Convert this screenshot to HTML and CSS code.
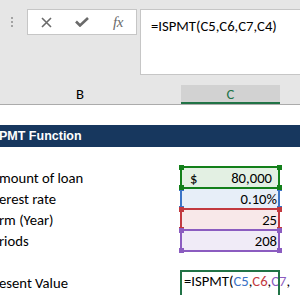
FILE: index.html
```html
<!DOCTYPE html>
<html lang="en">
<head>
    <meta charset="UTF-8">
    <meta name="viewport" content="width=device-width, initial-scale=1.0">
    <title>ISPMT Function</title>
    <link rel="stylesheet" href="styles.css">
</head>
<body>
    <div class="top">
        <div class="formula-bar">
            <div class="grip"><span></span><span></span><span></span></div>
            <div class="fx-tools">
                <span class="tool">
                    <svg width="11" height="11" viewBox="0 0 11 11">
                        <path d="M1 1 L10 10 M10 1 L1 10" stroke="#6a6a6a" stroke-width="1.6" fill="none"/>
                    </svg>
                </span>
                <span class="tool">
                    <svg width="14" height="10" viewBox="0 0 14 10">
                        <path d="M1 4.5 L5 8.5 L13 1" stroke="#6a6a6a" stroke-width="2.6" fill="none"/>
                    </svg>
                </span>
                <span class="tool fx">fx</span>
            </div>
            <div class="formula-input">=ISPMT(C5,C6,C7,C4)</div>
        </div>

        <div class="col-headers">
            <div class="col-head">B</div>
            <div class="col-head active">C</div>
            <div class="col-head"></div>
        </div>
    </div>

    <div class="sheet">
        <div class="row blank"></div>
        <div class="row title">PMT Function</div>
        <div class="row blank"></div>

        <div class="row">
            <div class="label">mount of loan</div>
            <div class="cell ref ref-green accounting"><span>$</span><span>80,000</span></div>
        </div>
        <div class="row">
            <div class="label">erest rate</div>
            <div class="cell ref ref-blue">0.10%</div>
        </div>
        <div class="row">
            <div class="label">rm (Year)</div>
            <div class="cell ref ref-red">25</div>
        </div>
        <div class="row">
            <div class="label">riods</div>
            <div class="cell ref ref-purple">208</div>
        </div>
        <div class="row">
            <div class="label"></div>
            <div class="cell"></div>
        </div>
        <div class="row">
            <div class="label">esent Value</div>
            <div class="cell editing">=ISPMT(<span class="c-blue">C5</span>,<span class="c-red">C6</span>,<span class="c-purple">C7</span>,</div>
        </div>
    </div>
</body>
</html>
```

FILE: styles.css
```css
:root {
    --grey: #e6e6e6;
    --box-border: #c6c6c6;
    --excel-green: #217346;
    --title-blue: #17375e;
    --ref-green: #13801a;
    --ref-blue: #3b73c5;
    --ref-red: #c2393f;
    --ref-purple: #8b5cc0;
    --cell-font: Carlito, Lato, 'Liberation Sans', sans-serif;
}

* {
    margin: 0;
    padding: 0;
    box-sizing: border-box;
}

body {
    width: 300px;
    height: 295px;
    overflow: hidden;
    background: white;
    color: #000;
    font-family: var(--cell-font);
    font-size: 14.67px;
}

.top {
    background: var(--grey);
}

/* formula bar */

.formula-bar {
    height: 75px;
    padding-top: 9px;
    display: flex;
    align-items: flex-start;
}

.grip {
    width: 27px;
    padding: 8px 0 0 11px;
    display: flex;
    flex-direction: column;
    gap: 2px;
}

.grip span {
    width: 2px;
    height: 2px;
    background: #a3a3a3;
}

.fx-tools {
    width: 110px;
    height: 26px;
    background: white;
    border: 1px solid var(--box-border);
    display: flex;
    align-items: center;
}

.tool {
    width: 36px;
    display: flex;
    justify-content: center;
    align-items: center;
}

.tool.fx {
    font-family: 'Liberation Serif', serif;
    font-style: italic;
    font-size: 15px;
    color: #6a6a6a;
    letter-spacing: -0.5px;
}

.formula-input {
    flex: 1;
    height: 66px;
    margin-left: 3px;
    background: white;
    border: 1px solid var(--box-border);
    border-right: none;
    padding: 7px 0 0 10px;
    line-height: 18px;
    white-space: nowrap;
}

/* column headers */

.col-headers,
.row {
    display: grid;
    grid-template-columns: 202px 99px 1fr;
    margin-left: -21px;
}

.col-headers {
    margin-top: 10px;
    height: 20px;
    border-bottom: 1px solid #ababab;
}

.col-head {
    display: flex;
    justify-content: center;
    align-items: center;
    line-height: 19px;
}

.col-head.active {
    background: #d2d2d2;
    color: var(--excel-green);
    box-shadow: inset 0 -2px 0 var(--excel-green);
}

/* sheet */

.row {
    height: 21px;
}

.row.blank {
    height: 20px;
}

.row.title {
    display: block;
    height: 22px;
    background: var(--title-blue);
    color: white;
    font-family: 'Liberation Sans', Arial, sans-serif;
    font-weight: bold;
    font-size: 12.5px;
    line-height: 21px;
    padding: 1px 0 0 20px;
}

.label,
.cell {
    display: flex;
    align-items: flex-end;
    line-height: 17px;
    padding-bottom: 1px;
    white-space: nowrap;
}

.label {
    padding-left: 20px;
}

.cell {
    justify-content: flex-end;
    padding-right: 3px;
}

.cell.accounting {
    justify-content: space-between;
    padding: 0 8px 1px 9px;
}

/* reference highlights */

.ref {
    position: relative;
}

.ref::after {
    content: '';
    position: absolute;
    inset: -1px 0 -1px -1px;
    border: 2px solid var(--ref);
}

.ref::before {
    content: '';
    position: absolute;
    inset: -2px;
    background:
        linear-gradient(var(--ref), var(--ref)) left top / 5px 5px no-repeat,
        linear-gradient(var(--ref), var(--ref)) right top / 5px 5px no-repeat,
        linear-gradient(var(--ref), var(--ref)) left bottom / 5px 5px no-repeat,
        linear-gradient(var(--ref), var(--ref)) right bottom / 5px 5px no-repeat;
}

.ref-green {
    --ref: var(--ref-green);
    background: #e3f0e3;
    z-index: 4;
}

.ref-blue {
    --ref: var(--ref-blue);
    background: #e7eef8;
    z-index: 1;
}

.ref-red {
    --ref: var(--ref-red);
    background: #f8e8e9;
    z-index: 2;
}

.ref-purple {
    --ref: var(--ref-purple);
    background: #f0ebf7;
    z-index: 3;
}

/* cell in edit mode */

.cell.editing {
    position: relative;
    justify-content: flex-start;
    padding: 0 0 3px 3px;
    overflow: visible;
}

.cell.editing::after {
    content: '';
    position: absolute;
    inset: -2px 0 -12px -1px;
    border: 2px solid var(--excel-green);
}

.c-blue { color: var(--ref-blue); }
.c-red { color: var(--ref-red); }
.c-purple { color: var(--ref-purple); }
```
